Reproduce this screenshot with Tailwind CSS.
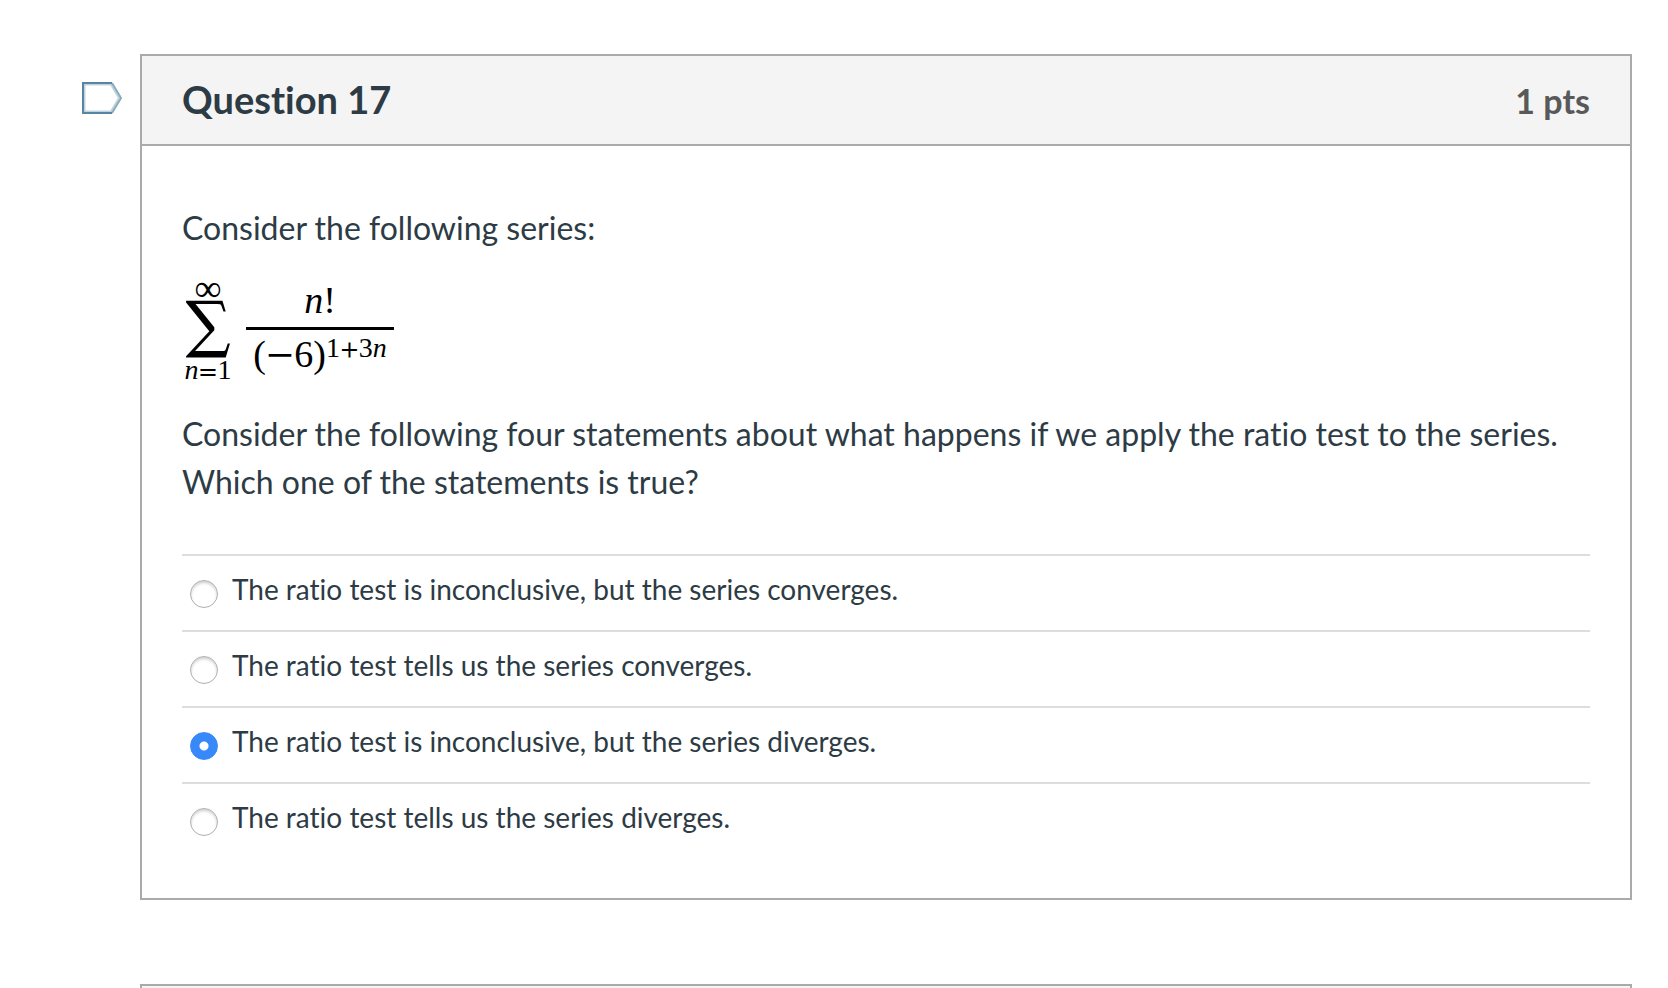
<!DOCTYPE html>
<html lang="en">
<head>
<meta charset="utf-8">
<meta name="viewport" content="width=device-width, initial-scale=1">
<title>Question 17</title>
<script src="https://cdn.jsdelivr.net/npm/@tailwindcss/browser@4"></script>
</head>
<body class="h-screen overflow-hidden bg-white font-['Lato',sans-serif] [font-variant-ligatures:none] text-[#2d3b45]">
<main class="flex h-full flex-col gap-[84px] overflow-hidden pt-[54px] pr-9 pl-[82px]">
  <div class="flex shrink-0 items-start gap-[18px]">
    <button type="button" aria-label="Flag question" class="mt-7 shrink-0">
      <svg width="40" height="32" viewBox="0 0 40 32" fill="none" class="block">
        <path d="M2.5 2.5H29L37 16L29 29.500H2.500Z" stroke="#bfd3df" stroke-width="2"/>
        <path d="M30 1L39 16L30 31" stroke="#8aabba" stroke-width="2"/>
        <path d="M30 1H1V31H30" stroke="#5586a2" stroke-width="2"/>
      </svg>
    </button>
    <section class="min-w-0 flex-1 border-2 border-[#aaa]">
      <header class="flex h-[90px] items-center justify-between border-b-2 border-[#aaa] bg-[#f4f4f4] px-10 pb-[2px]">
        <h1 class="text-[38px] leading-[48px] font-bold">Question 17</h1>
        <span class="pt-1 text-[34px] leading-[48px] font-bold text-[#595959]">1 pts</span>
      </header>
      <div class="px-10 pt-[58px] pb-10">
        <p class="text-[32px] leading-[48px]">Consider the following series:</p>
        <div class="mt-7 flex h-[106px] items-start gap-3 font-['Liberation_Serif',serif] text-black" role="math" aria-label="sum from n = 1 to infinity of n! / (-6)^(1+3n)">
          <div class="flex w-[52px] flex-col items-center gap-1 whitespace-nowrap">
            <span class="h-5 text-[38px] leading-4">∞</span>
            <span class="h-[50px] font-['DejaVu_Math_TeX_Gyre','DejaVu_Serif',serif] text-[54px] leading-[48px]">∑</span>
            <span class="h-6 text-[28px] leading-6"><i>n</i><span class="font-['DejaVu_Math_TeX_Gyre','DejaVu_Serif',serif] text-[24px]">=</span>1</span>
          </div>
          <div class="flex w-[148px] flex-col items-center whitespace-nowrap">
            <span class="h-[47px] text-[38px] leading-10"><i>n</i>!</span>
            <span class="h-[3px] w-full bg-black"></span>
            <span class="flex items-start text-[38px] leading-[48px]">(<span class="font-['DejaVu_Math_TeX_Gyre','DejaVu_Serif',serif] text-[36px]">−</span>6)<span class="text-[28px] leading-9">1<span class="font-['DejaVu_Math_TeX_Gyre','DejaVu_Serif',serif] text-[24px]">+</span>3<i>n</i></span></span>
          </div>
        </div>
        <p class="mt-6 text-[32px] leading-[48px]">Consider the following four statements about what happens if we apply the ratio test to the series. Which one of the statements is true?</p>
        <fieldset class="mt-12 text-[28px] leading-10">
          <label class="flex h-[76px] items-start gap-[14px] border-t-2 border-[#ddd] pt-[13px] pl-2">
            <input type="radio" name="answer" class="mt-[11px] size-7 shrink-0 appearance-none rounded-full border border-[#b0b0b0] shadow-[inset_0_2px_3px_#00000030] checked:border-[#3789fa] checked:bg-[radial-gradient(circle,white_4px,#3789fa_5px)] checked:shadow-none">
            <span>The ratio test is inconclusive, but the series converges.</span>
          </label>
          <label class="flex h-[76px] items-start gap-[14px] border-t-2 border-[#ddd] pt-[13px] pl-2">
            <input type="radio" name="answer" class="mt-[11px] size-7 shrink-0 appearance-none rounded-full border border-[#b0b0b0] shadow-[inset_0_2px_3px_#00000030] checked:border-[#3789fa] checked:bg-[radial-gradient(circle,white_4px,#3789fa_5px)] checked:shadow-none">
            <span>The ratio test tells us the series converges.</span>
          </label>
          <label class="flex h-[76px] items-start gap-[14px] border-t-2 border-[#ddd] pt-[13px] pl-2">
            <input type="radio" name="answer" checked class="mt-[11px] size-7 shrink-0 appearance-none rounded-full border border-[#b0b0b0] shadow-[inset_0_2px_3px_#00000030] checked:border-[#3789fa] checked:bg-[radial-gradient(circle,white_4px,#3789fa_5px)] checked:shadow-none">
            <span>The ratio test is inconclusive, but the series diverges.</span>
          </label>
          <label class="flex h-[76px] items-start gap-[14px] border-t-2 border-[#ddd] pt-[13px] pl-2">
            <input type="radio" name="answer" class="mt-[11px] size-7 shrink-0 appearance-none rounded-full border border-[#b0b0b0] shadow-[inset_0_2px_3px_#00000030] checked:border-[#3789fa] checked:bg-[radial-gradient(circle,white_4px,#3789fa_5px)] checked:shadow-none">
            <span>The ratio test tells us the series diverges.</span>
          </label>
        </fieldset>
      </div>
    </section>
  </div>
  <section class="ml-[58px] min-h-0 shrink border-2 border-b-0 border-[#aaa]">
    <header class="h-[90px] border-b-2 border-[#aaa] bg-[#f4f4f4]"></header>
  </section>
</main>
</body>
</html>
